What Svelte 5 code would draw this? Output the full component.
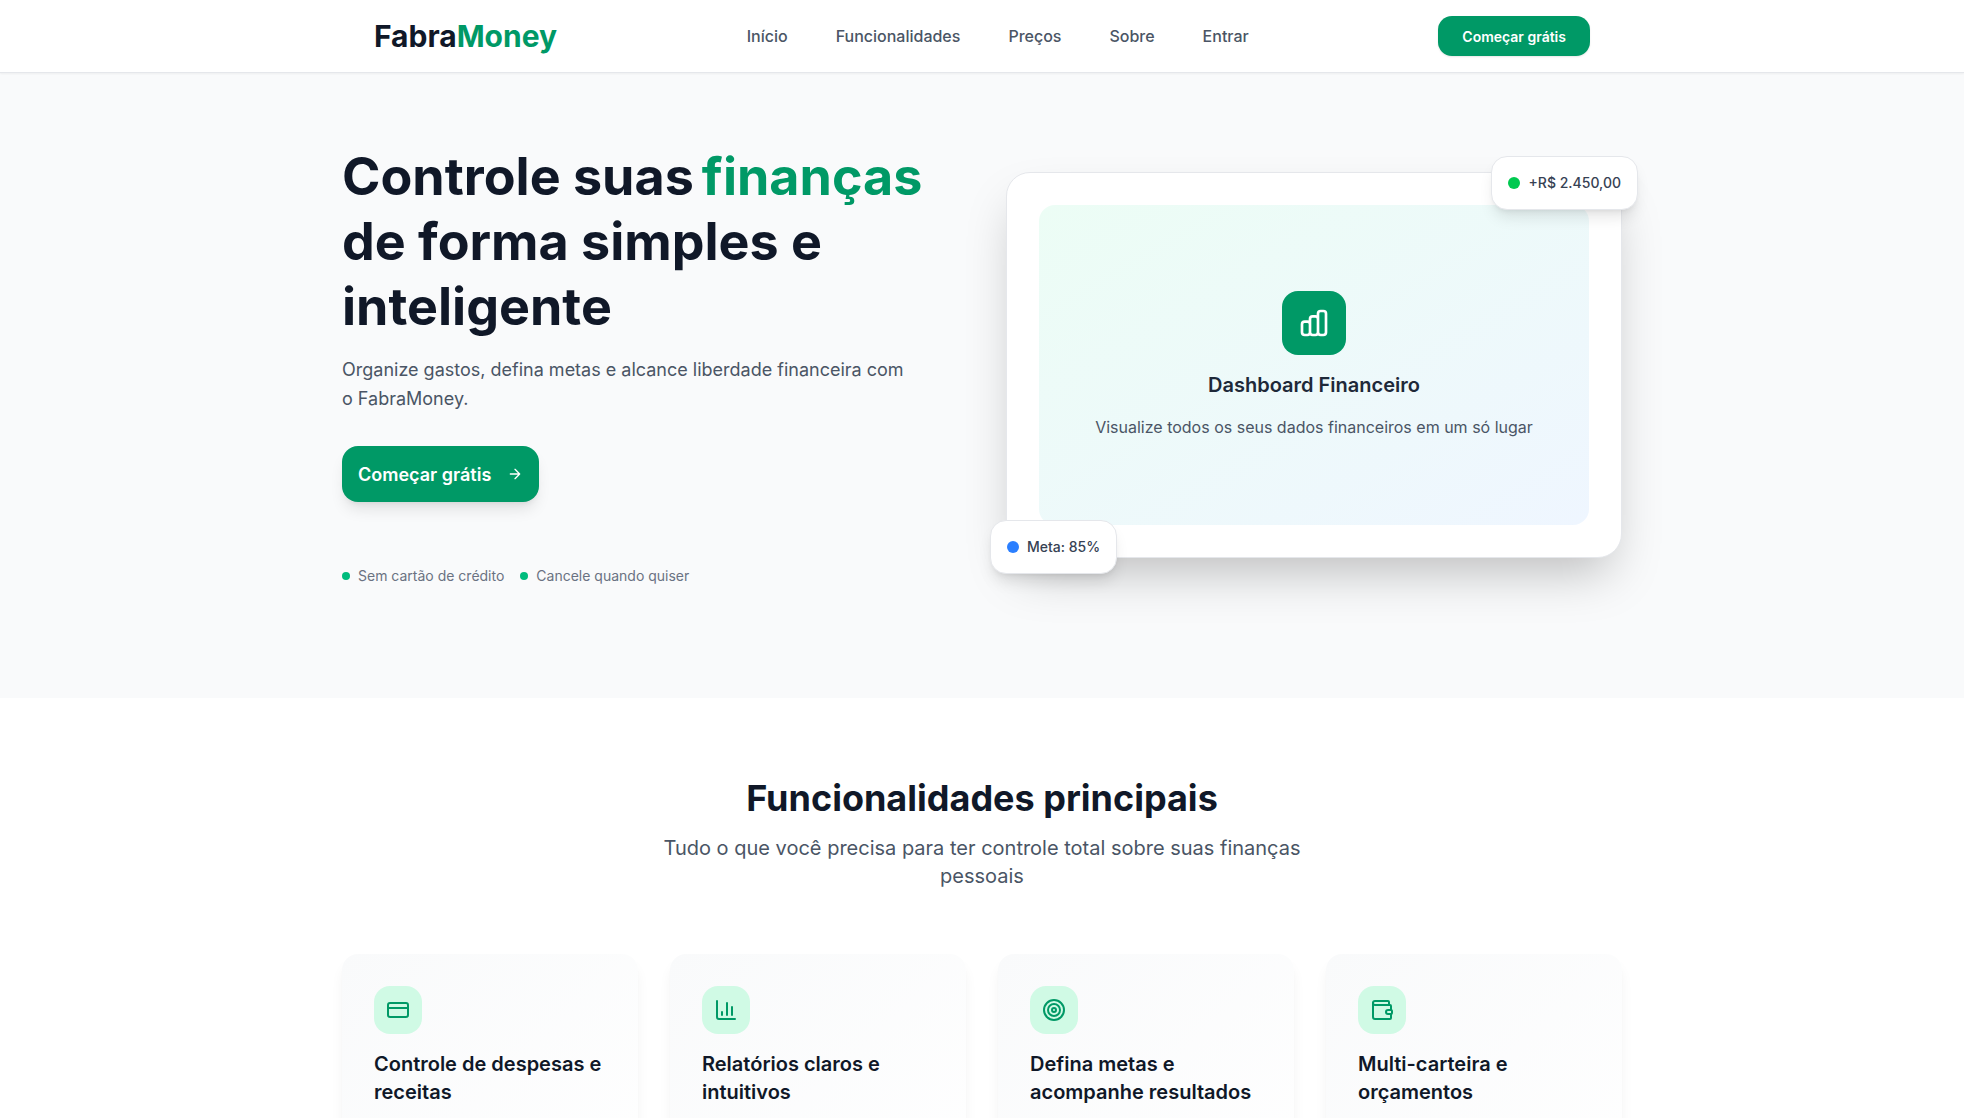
<script>
  const links = [
    { label: 'Início', href: '#inicio' },
    { label: 'Funcionalidades', href: '#funcionalidades' },
    { label: 'Preços', href: '#precos' },
    { label: 'Sobre', href: '#sobre' },
    { label: 'Entrar', href: '#entrar' }
  ];

  const perks = ['Sem cartão de crédito', 'Cancele quando quiser'];

  const features = [
    { icon: 'card', title: 'Controle de despesas e receitas' },
    { icon: 'chart', title: 'Relatórios claros e intuitivos' },
    { icon: 'target', title: 'Defina metas e acompanhe resultados' },
    { icon: 'wallet', title: 'Multi-carteira e orçamentos' }
  ];
</script>

<header>
  <div class="container bar">
    <a class="logo" href="#inicio">Fabra<span>Money</span></a>
    <nav>
      {#each links as link}
        <a href={link.href}>{link.label}</a>
      {/each}
    </nav>
    <button class="btn small">Começar grátis</button>
  </div>
</header>

<main>
  <section class="hero" id="inicio">
    <div class="container columns">
      <div class="intro">
        <h1>Controle suas<span>finanças</span> de forma simples e inteligente</h1>
        <p class="lead">
          Organize gastos, defina metas e alcance liberdade financeira com o FabraMoney.
        </p>
        <button class="btn large">
          Começar grátis
          <svg viewBox="0 0 24 24" aria-hidden="true">
            <path d="M5 12h14M12 5l7 7-7 7" />
          </svg>
        </button>
        <ul class="perks">
          {#each perks as perk}
            <li><i class="dot"></i>{perk}</li>
          {/each}
        </ul>
      </div>

      <div class="preview">
        <div class="panel">
          <div class="panel-icon">
            <svg viewBox="0 0 24 24" aria-hidden="true">
              <path
                d="M9 19v-6a2 2 0 0 0-2-2H5a2 2 0 0 0-2 2v6a2 2 0 0 0 2 2h2a2 2 0 0 0 2-2zm0 0V9a2 2 0 0 1 2-2h2a2 2 0 0 1 2 2v10m-6 0a2 2 0 0 0 2 2h2a2 2 0 0 0 2-2m0 0V5a2 2 0 0 1 2-2h2a2 2 0 0 1 2 2v14a2 2 0 0 1-2 2h-2a2 2 0 0 1-2-2z"
              />
            </svg>
          </div>
          <h2>Dashboard Financeiro</h2>
          <p>Visualize todos os seus dados financeiros em um só lugar</p>
        </div>
        <div class="badge income"><i class="dot"></i>+R$ 2.450,00</div>
        <div class="badge goal"><i class="dot"></i>Meta: 85%</div>
      </div>
    </div>
  </section>

  <section class="features" id="funcionalidades">
    <div class="container">
      <h2>Funcionalidades principais</h2>
      <p class="subtitle">
        Tudo o que você precisa para ter controle total sobre suas finanças pessoais
      </p>
      <div class="cards">
        {#each features as feature}
          <article>
            <div class="card-icon">
              <svg viewBox="0 0 24 24" aria-hidden="true">
                {#if feature.icon === 'card'}
                  <rect x="2" y="5" width="20" height="14" rx="2" />
                  <path d="M2 10h20" />
                {:else if feature.icon === 'chart'}
                  <path d="M3 3v16a2 2 0 0 0 2 2h16M18 17V9M13 17V5M8 17v-3" />
                {:else if feature.icon === 'target'}
                  <circle cx="12" cy="12" r="10" />
                  <circle cx="12" cy="12" r="6" />
                  <circle cx="12" cy="12" r="2" />
                {:else}
                  <path d="M19 7V4a1 1 0 0 0-1-1H5a2 2 0 0 0 0 4h15a1 1 0 0 1 1 1v4h-3a2 2 0 0 0 0 4h3a1 1 0 0 0 1-1v-2a1 1 0 0 0-1-1" />
                  <path d="M3 5v14a2 2 0 0 0 2 2h15a1 1 0 0 0 1-1v-4" />
                {/if}
              </svg>
            </div>
            <h3>{feature.title}</h3>
          </article>
        {/each}
      </div>
    </div>
  </section>
</main>

<style>
  :global(body) {
    background: #fff;
    color: #101828;
    font-family: Inter, 'Liberation Sans', sans-serif;
    font-size: 16px;
    line-height: 24px;
  }

  h1,
  h2,
  h3,
  p,
  ul {
    margin: 0;
    padding: 0;
  }

  a {
    color: inherit;
    text-decoration: none;
  }

  svg {
    display: block;
    width: 24px;
    height: 24px;
    flex: none;
    fill: none;
    stroke: currentColor;
    stroke-width: 2;
    stroke-linecap: round;
    stroke-linejoin: round;
  }

  .container {
    box-sizing: border-box;
    max-width: 1280px;
    margin: 0 auto;
  }

  header {
    position: relative;
    z-index: 1;
    background: #fff;
    border-bottom: 1px solid #e5e7eb;
    box-shadow: 0 1px 2px rgba(0, 0, 0, 0.05);
  }

  .bar {
    display: flex;
    align-items: center;
    justify-content: space-between;
    padding: 16px 32px;
  }

  .logo {
    font-size: 30px;
    font-weight: 700;
    line-height: 36px;
  }

  .logo span,
  h1 span {
    color: #009966;
  }

  nav {
    display: flex;
    gap: 48px;
    color: #4a5565;
    font-weight: 500;
  }

  .btn {
    display: flex;
    align-items: center;
    border: 0;
    background: #009966;
    color: #fff;
    font-family: inherit;
    font-weight: 600;
    cursor: pointer;
  }

  .small {
    height: 40px;
    padding: 0 24px;
    border-radius: 14px;
    font-size: 14px;
    box-shadow: 0 1px 2px rgba(0, 0, 0, 0.1);
  }

  .large {
    gap: 16px;
    height: 56px;
    margin-top: 33px;
    padding: 0 16px;
    border-radius: 16px;
    font-size: 18px;
    box-shadow: 0 10px 15px -3px rgba(0, 0, 0, 0.1), 0 4px 6px -4px rgba(0, 0, 0, 0.1);
  }

  .large svg {
    width: 16px;
    height: 16px;
  }

  .hero {
    padding: 71px 0 112px;
    background: #f9fafb;
  }

  .columns {
    display: grid;
    grid-template-columns: 1fr 1fr;
    align-items: center;
    gap: 48px;
  }

  h1 {
    font-size: 52px;
    font-weight: 700;
    line-height: 65px;
  }

  h1 span {
    margin-left: 8px;
  }

  .lead {
    max-width: 576px;
    margin-top: 16px;
    color: #4a5565;
    font-size: 18px;
    line-height: 29px;
  }

  .perks {
    display: flex;
    gap: 16px;
    margin-top: 64px;
    color: #6a7282;
    font-size: 14px;
    line-height: 20px;
    list-style: none;
  }

  .perks li,
  .badge {
    display: flex;
    align-items: center;
    gap: 8px;
  }

  .dot {
    width: 8px;
    height: 8px;
    border-radius: 50%;
    background: #00bc7d;
  }

  .preview {
    position: relative;
    padding: 32px;
    border: 1px solid #e5e7eb;
    border-radius: 24px;
    background: #fff;
    box-shadow: 0 25px 50px -12px rgba(0, 0, 0, 0.25);
  }

  .panel {
    display: flex;
    flex-direction: column;
    align-items: center;
    justify-content: center;
    height: 320px;
    border-radius: 16px;
    background: linear-gradient(to bottom right, #ecfdf5, #eff6ff);
    text-align: center;
  }

  .panel-icon {
    display: grid;
    place-items: center;
    width: 64px;
    height: 64px;
    border-radius: 16px;
    background: #009966;
    color: #fff;
  }

  .panel-icon svg {
    width: 32px;
    height: 32px;
  }

  .panel h2 {
    margin-top: 16px;
    color: #1e2939;
    font-size: 20px;
    font-weight: 600;
    line-height: 28px;
  }

  .panel p {
    margin-top: 16px;
    color: #4a5565;
  }

  .badge {
    position: absolute;
    padding: 16px;
    border: 1px solid #e5e7eb;
    border-radius: 16px;
    background: #fff;
    color: #364153;
    font-size: 14px;
    font-weight: 500;
    line-height: 20px;
    box-shadow: 0 10px 15px -3px rgba(0, 0, 0, 0.1), 0 4px 6px -4px rgba(0, 0, 0, 0.1);
  }

  .badge .dot {
    width: 12px;
    height: 12px;
  }

  .income {
    top: -17px;
    right: -17px;
  }

  .income .dot {
    background: #00c950;
  }

  .goal {
    bottom: -17px;
    left: -17px;
  }

  .goal .dot {
    background: #2b7fff;
  }

  .features {
    padding: 80px 0;
  }

  .features h2 {
    font-size: 36px;
    font-weight: 700;
    line-height: 40px;
    text-align: center;
  }

  .subtitle {
    max-width: 672px;
    margin: 16px auto 64px;
    color: #4a5565;
    font-size: 20px;
    line-height: 28px;
    text-align: center;
  }

  .cards {
    display: grid;
    grid-template-columns: repeat(4, 1fr);
    gap: 32px;
  }

  article {
    min-height: 208px;
    padding: 32px;
    border-radius: 16px;
    background: linear-gradient(to bottom right, #f9fafb, #fff);
    box-shadow: 0 10px 15px -3px rgba(0, 0, 0, 0.07), 0 4px 6px -4px rgba(0, 0, 0, 0.07);
  }

  .card-icon {
    display: grid;
    place-items: center;
    width: 48px;
    height: 48px;
    border-radius: 16px;
    background: #d0fae5;
    color: #009966;
  }

  article h3 {
    margin-top: 16px;
    font-size: 20px;
    font-weight: 600;
    line-height: 28px;
  }
</style>
